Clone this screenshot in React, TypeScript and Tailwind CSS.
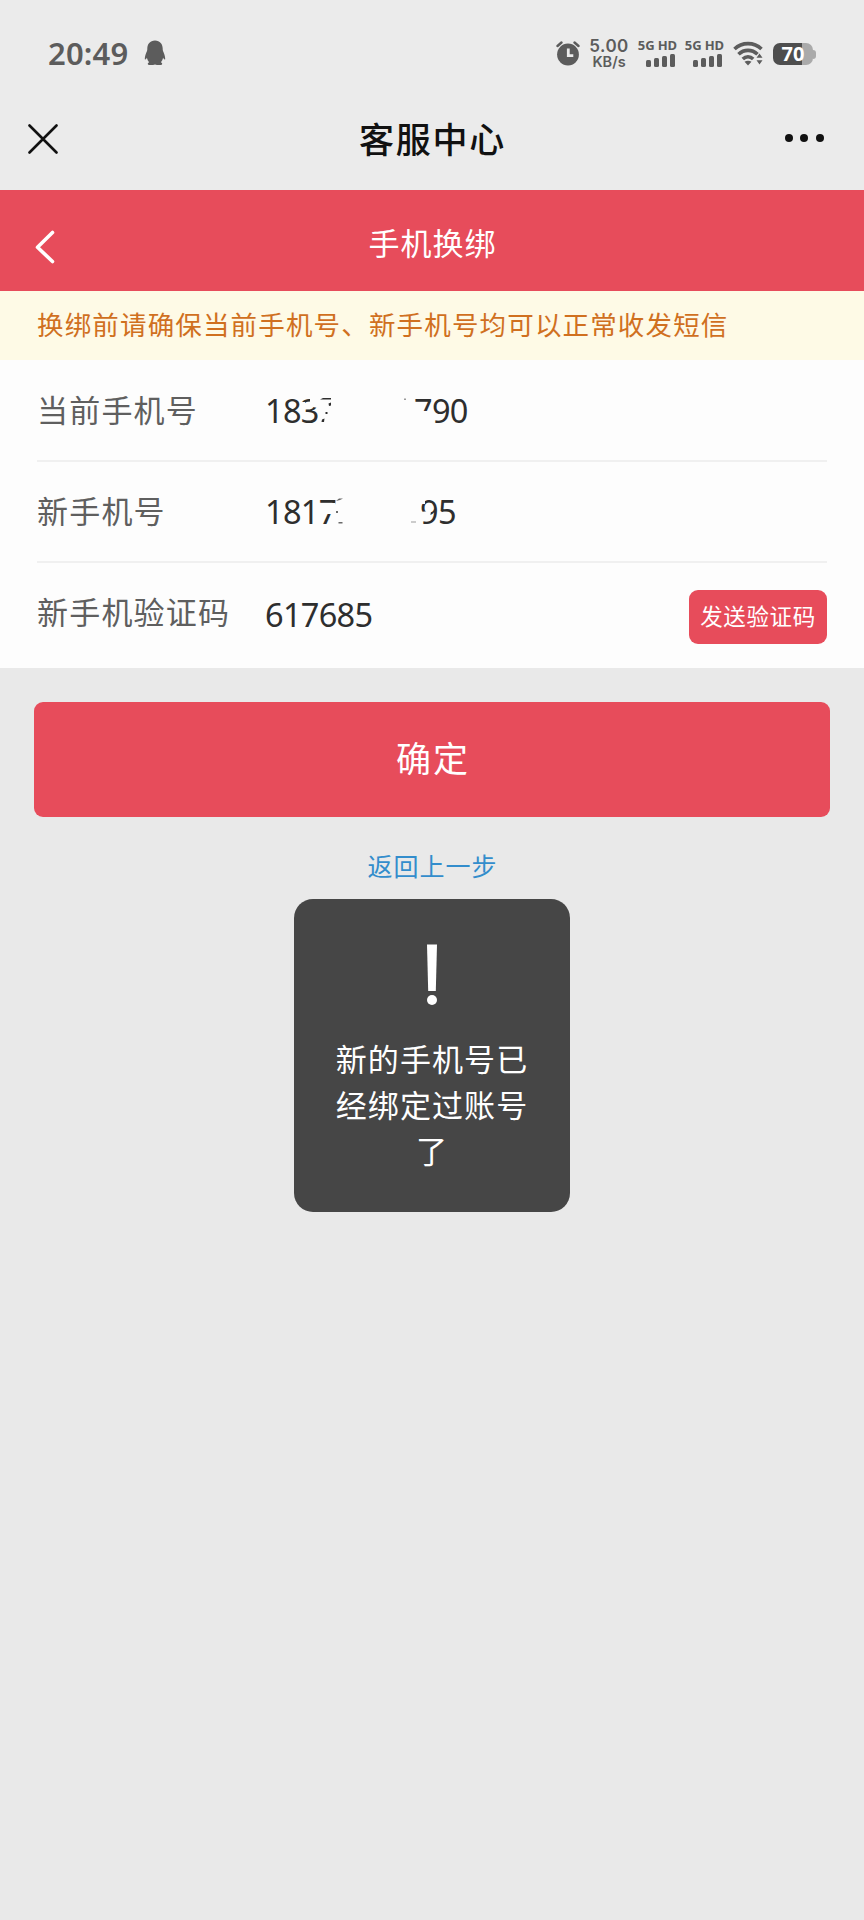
import clsx from 'clsx'
import React from 'react'

const red = 'bg-[#e74c5b]'

function StatusBar(): React.JSX.Element {
    return (
        <div className="flex items-start justify-between h-[92px] pl-[48px] pr-[48px] text-[#5c5c5c]">
            <div className="flex items-center pt-[34px]">
                <span className="w-[82px] text-[31px] leading-[38px] font-semibold tracking-[0.200px] whitespace-nowrap">20:49</span>
                <svg className="ml-[14px] w-[22px] h-[26px]" viewBox="0 0 22 26" fill="currentColor">
                    <path d="M11 .5C6 .5 3.300 4.200 3.300 8.500c0 .8 0 1.600-.3 2.400C1.800 13.500.8 16 .8 19c0 .8.900.7 1.300.1l.8-1.300c.4 1.800 1.100 3.300 2.200 4.500-1.200.7-1.600 1.500-1.100 2.100.7.800 4.800.8 7 0 2.200.8 6.300.8 7 0 .5-.6.1-1.400-1.100-2.100 1.100-1.200 1.800-2.700 2.200-4.500l.8 1.300c.4.600 1.300.7 1.300-.1 0-3-1-5.500-2.200-8.100-.3-.8-.3-1.600-.3-2.400C18.700 4.200 16 .5 11 .5Z" />
                </svg>
            </div>

            <div className="flex items-start pt-[39px]">
                <svg className="w-[24px] h-[28px] -ml-px mr-px" viewBox="0 0 24 28" fill="none">
                    <circle cx="12" cy="15.500" r="10.900" fill="#5c5c5c" />
                    <path d="M1.500 7 5.500 3.500M22.500 7 18.500 3.500" stroke="#5c5c5c" strokeWidth="2.400" strokeLinecap="round" />
                    <path d="M12.300 9.500v7.200h5" stroke="#ebebeb" strokeWidth="2.800" />
                </svg>
                <div className="flex flex-col items-center w-[40px] ml-[8px] mr-px font-semibold whitespace-nowrap font-[Inter,sans-serif]">
                    <span className="text-[17px] leading-[15px] tracking-[0.500px]">5.00</span>
                    <span className="text-[14.500px] leading-[15px]">KB/s</span>
                </div>
                <Signal className="ml-[7px]" />
                <Signal className="ml-[7px]" />
                <svg className="ml-[9px] mt-[2px] w-[31px] h-[25px]" viewBox="0 0 31 25" fill="none" stroke="#5c5c5c" strokeWidth="3.600">
                    <path d="M1.500 8C9 .8 21 .8 28.500 8" />
                    <path d="M5.500 13.300c5.500-5.300 13.500-5.300 19 0" />
                    <path d="M9.800 18c3-2.800 7.400-2.800 10.400 0" />
                    <path d="M11.500 20.800c2-1.500 5-1.500 7 0L15 24.500Z" fill="#5c5c5c" stroke="none" />
                    <path d="m26.500 12.500 3 4.300h-6ZM26.500 23.500l3-4.300h-6Z" fill="#5c5c5c" stroke="none" />
                </svg>
                <div className="flex items-center ml-[9px] mt-[4px]">
                    <div className="flex items-center justify-center w-[40px] h-[22px] rounded-[7px] bg-linear-to-r from-[#4e4e4e] from-72% to-[#aaaaaa] to-72% text-white text-[20px] font-bold leading-[22px]">70</div>
                    <div className="w-[3px] h-[9px] rounded-r-full bg-[#aaaaaa]" />
                </div>
            </div>
        </div>
    )
}

function Signal({ className }: { className: string }): React.JSX.Element {
    return (
        <div className={clsx('flex flex-col items-end w-[40px] whitespace-nowrap', className)}>
            <span className="text-[13px] leading-[13px] font-bold tracking-[-0.100px]">5G HD</span>
            <div className="flex items-end gap-[3px] mt-px h-[14px] pr-[2px]">
                <i className="w-[5px] h-[7px] rounded-[1.500px] bg-[#5c5c5c]" />
                <i className="w-[5px] h-[9px] rounded-[1.500px] bg-[#5c5c5c]" />
                <i className="w-[5px] h-[11px] rounded-[1.500px] bg-[#5c5c5c]" />
                <i className="w-[5px] h-[13px] rounded-[1.500px] bg-[#5c5c5c]" />
            </div>
        </div>
    )
}

function TitleBar(): React.JSX.Element {
    return (
        <div className="flex items-center justify-between h-[98px] pl-[28px] pr-[40px] pb-px text-[#111111]">
            <svg className="w-[30px] h-[30px] -mt-[4px]" viewBox="0 0 30 30" stroke="currentColor" strokeWidth="2.600" strokeLinecap="round">
                <path d="m1.500 1.500 27 27M28.500 1.500l-27 27" />
            </svg>
            <h1 className="text-[35px] font-medium tracking-[1.800px] pl-[22px]">客服中心</h1>
            <div className="flex gap-[7.500px] -mt-[5px]">
                <i className="w-2 h-2 rounded-full bg-current" />
                <i className="w-2 h-2 rounded-full bg-current" />
                <i className="w-2 h-2 rounded-full bg-current" />
            </div>
        </div>
    )
}

type RowProps = {
    label: string
    last?: boolean
    children: React.ReactNode
}

function Row({ label, last, children }: RowProps): React.JSX.Element {
    return (
        <div className={clsx('flex items-center ml-[37px] mr-[37px]', last ? 'h-[107px]' : 'h-[101px] border-b-2 border-[#f0f0f0]')}>
            <span className={clsx('w-[228px] text-[31px] tracking-[1.200px] text-[#5f5f5f] whitespace-nowrap', last && 'pb-[8px]')}>{label}</span>
            {children}
        </div>
    )
}

const number = 'text-[32.500px] text-[#2e2e2e] tracking-[-0.700px] whitespace-nowrap'

function App(): React.JSX.Element {
    return (
        <div className="relative w-[864px] h-[1920px] bg-[#e9e9e9] font-['Noto_Sans','Noto_Sans_CJK_SC',sans-serif] overflow-hidden">
            <header className="bg-[#ebebeb]">
                <StatusBar />
                <TitleBar />
            </header>

            <nav className={clsx('relative flex items-center justify-center h-[101px] text-white', red)}>
                <svg className="absolute left-[34px] top-[40px] w-[22px] h-[34px]" viewBox="0 0 22 34" fill="none" stroke="currentColor" strokeWidth="3.600" strokeLinecap="round" strokeLinejoin="round">
                    <path d="M18.500 2.500 3.500 17.300l15 14.200" />
                </svg>
                <h2 className="text-[31px] tracking-[1px] pt-[5px] pl-px">手机换绑</h2>
            </nav>

            <p className="flex items-center h-[69px] pl-[37px] bg-[#fefae6] text-[26.500px] tracking-[1.160px] text-[#d0701f] whitespace-nowrap">
                换绑前请确保当前手机号、新手机号均可以正常收发短信
            </p>

            <section className="h-[308px] pt-px bg-[#fdfdfd]">
                <Row label="当前手机号">
                    <div className={clsx('relative flex top-px', number)}>
                        <span className="w-[149px]">1837</span>
                        <span>790</span>
                        {/* rubbed-out digits */}
                        <svg className="absolute left-0 top-0 w-[210px] h-[45px]" viewBox="0 0 210 45">
                            <path fill="#fdfdfd" d="M45 8h8v13l-5-1-3-5ZM35 15h5v6h-5ZM53 8H72v30H53ZM146 24h17l-3 14h-14Z" />
                            <path fill="#2e2e2e" d="M55 12.500 58 11h8v1.500ZM63.500 16.500l2.500-1v3l-2 .5ZM60.500 25h2v2h-2ZM57 32.500l2.500-1-.5 3.500h-2.500Z" />
                            <path fill="#9a9a9a" d="M139 11.500h2v1.500h-2Z" />
                        </svg>
                    </div>
                </Row>
                <Row label="新手机号">
                    <div className={clsx('relative flex top-px', number)}>
                        <span className="w-[155px]">18173</span>
                        <span>95</span>
                        <svg className="absolute left-0 top-0 w-[210px] h-[45px]" viewBox="0 0 210 45">
                            <path fill="#fdfdfd" d="M54 15h16v11H54ZM70.500 8H90v30H70.500ZM154 8h6v8h-6ZM154 24l12-1-1 7h-11Z" />
                            <path fill="#6a6a6a" d="M71 13l3-2.500h4l-3 1.500ZM71 23h2v2h-2ZM73.500 34h4v1.500h-4Z" />
                            <path fill="#9a9a9a" d="M146 33.500h5v1h-5Z" />
                        </svg>
                    </div>
                </Row>
                <Row label="新手机验证码" last>
                    <span className={clsx(number, 'pb-[3px]')}>617685</span>
                    <button className={clsx('ml-auto w-[138px] h-[54px] rounded-[9px] text-white text-[22.500px] tracking-[0.600px]', red)}>发送验证码</button>
                </Row>
            </section>

            <main className="flex flex-col items-center px-[34px] pt-[34px]">
                <button className={clsx('w-full h-[115px] rounded-[9px] text-white text-[35px] tracking-[2px] pl-[2px]', red)}>确定</button>
                <a className="mt-[30px] text-[25px] leading-[38px] tracking-[1px] pl-px text-[#338dcc]">返回上一步</a>
            </main>

            <div className="absolute left-[294px] top-[899px] w-[276px] h-[313px] rounded-[19px] bg-[#464646] text-white flex flex-col items-center pt-[45px]">
                <svg className="w-[12px] h-[62px]" viewBox="0 0 12 62" fill="currentColor">
                    <path d="M1 .5h10L9.800 47H2.200Z" />
                    <circle cx="6" cy="56" r="5" />
                </svg>
                <p className="w-[196px] mt-[30px] text-[31px] leading-[46px] tracking-[1.100px] text-center">新的手机号已经绑定过账号了</p>
            </div>
        </div>
    )
}

export default App
